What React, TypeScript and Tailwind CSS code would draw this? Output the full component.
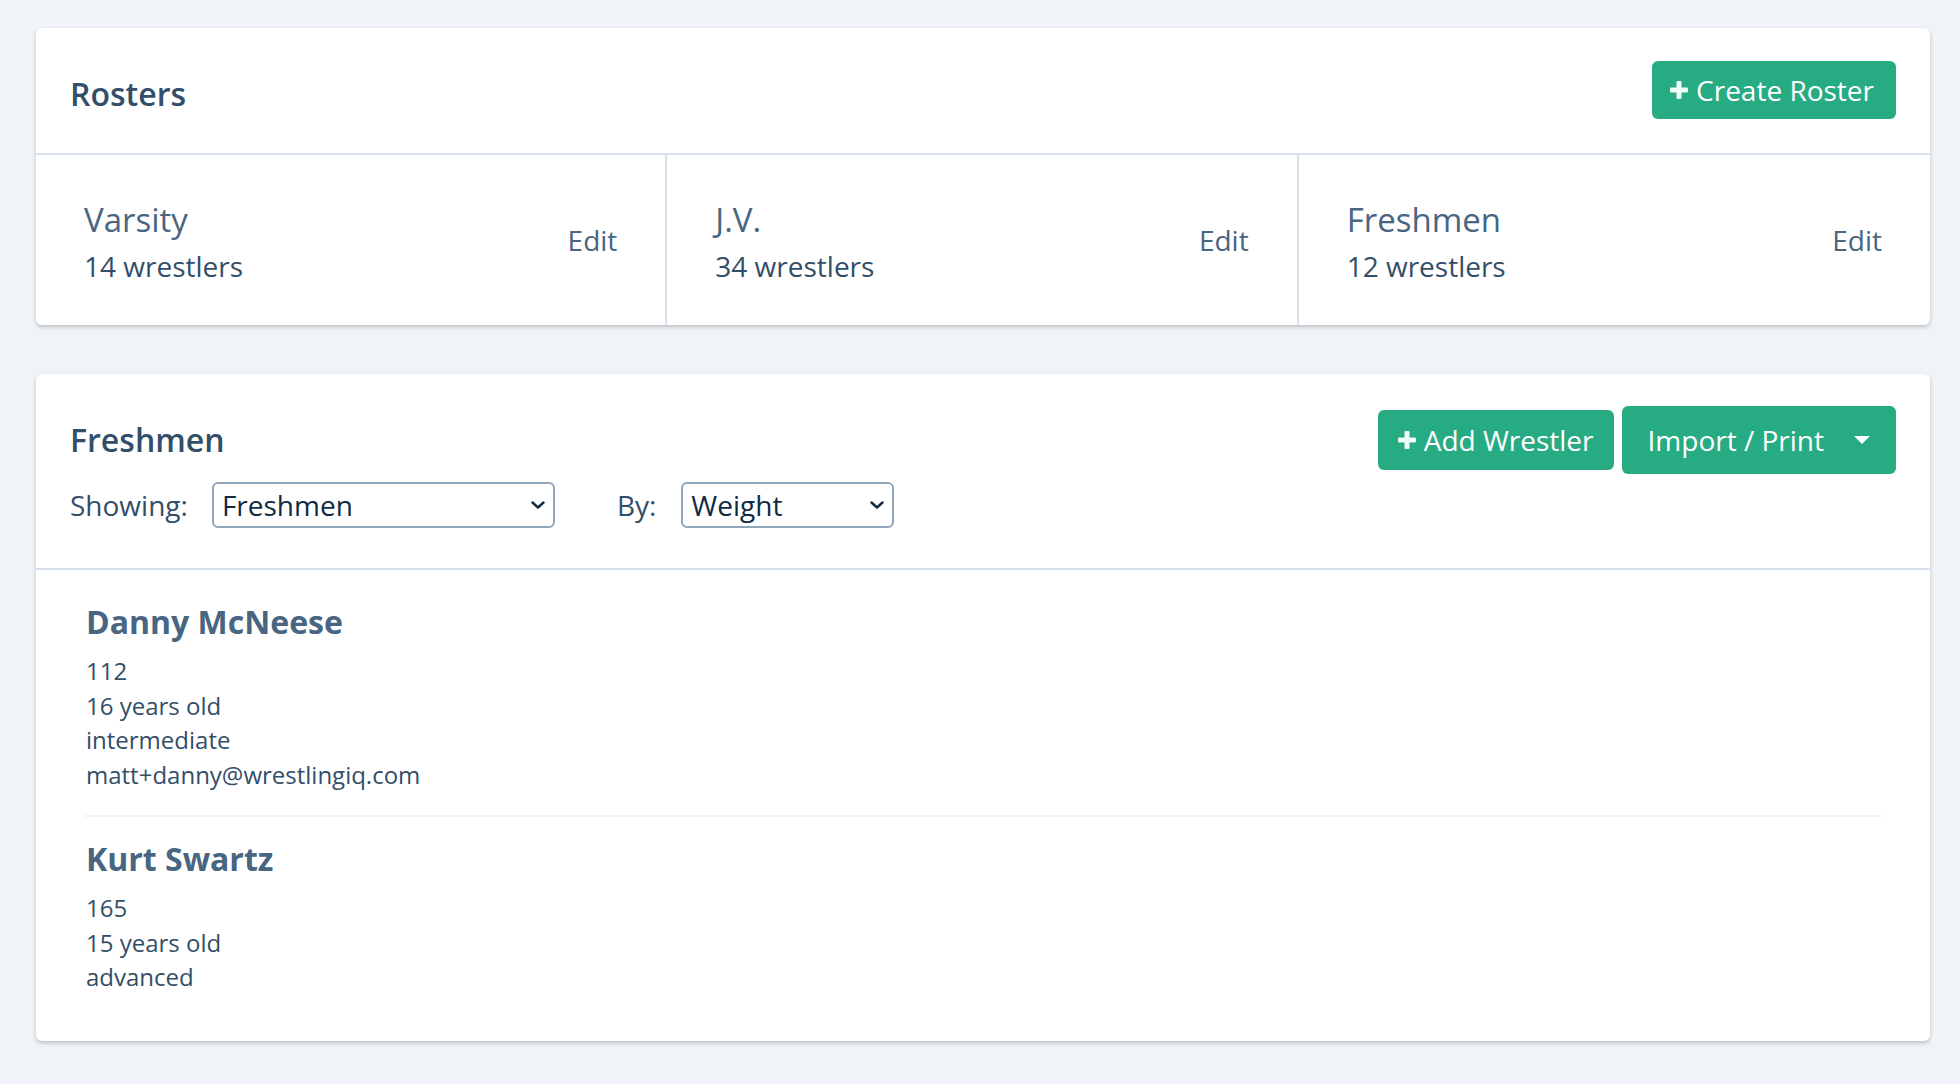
import React from "react";

const Plus = () => (
  <svg width="18" height="18" viewBox="0 0 18 18" className="shrink-0">
    <rect x="6.5" y="0" width="5" height="18" rx="1" fill="#EFFCF6" />
    <rect x="0" y="6.5" width="18" height="5" rx="1" fill="#EFFCF6" />
  </svg>
);

const Chevron = () => (
  <svg width="14" height="8" viewBox="0 0 14 8" className="shrink-0">
    <path d="M1.5 1.5 L7 6.5 L12.5 1.5" fill="none" stroke="#102A43" strokeWidth="2.4" strokeLinecap="round" strokeLinejoin="round" />
  </svg>
);

const Caret = () => (
  <svg width="16" height="8" viewBox="0 0 16 8" className="shrink-0">
    <path d="M0 0 L16 0 L8 8 Z" fill="#FFFFFF" />
  </svg>
);

const rosters = [
  { name: "Varsity", count: "14 wrestlers" },
  { name: "J.V.", count: "34 wrestlers" },
  { name: "Freshmen", count: "12 wrestlers" },
];

const wrestlers = [
  { name: "Danny McNeese", lines: ["112", "16 years old", "intermediate", "matt+danny@wrestlingiq.com"] },
  { name: "Kurt Swartz", lines: ["165", "15 years old", "advanced"] },
];

export default function App() {
  return (
    <div
      className="min-h-[1084px] w-full bg-[#F0F4F8] pl-[36px] pr-[30px] pt-[28px] pb-[40px]"
      style={{ fontFamily: "'Open Sans', 'Noto Sans', sans-serif" }}
    >
      {/* Rosters card */}
      <div className="rounded-[6px] bg-white shadow-[0_2px_4px_rgba(0,0,0,0.22)]">
        <div className="flex items-center justify-between border-b-2 border-[#D9E2EC] px-[34px] pt-[33px] pb-[34px]">
          <h2 className="pt-[8px] text-[32px] font-semibold leading-[44px] text-[#334E68]">Rosters</h2>
          <button className="flex h-[58px] items-center gap-[8px] rounded-[6px] bg-[#27AB83] pl-[18px] pr-[22px] text-[28px] leading-none text-white">
            <Plus />
            <span>Create Roster</span>
          </button>
        </div>
        <div className="grid grid-cols-3">
          {rosters.map((r, i) => (
            <div
              key={r.name}
              className={
                "flex h-[170px] items-center justify-between px-[48px] " +
                (i < 2 ? "border-r-2 border-[#D9E2EC]" : "")
              }
            >
              <div className="flex flex-col">
                <span className="text-[33px] leading-[52px] text-[#486581]">{r.name}</span>
                <span className="text-[28px] leading-[40px] text-[#334E68]">{r.count}</span>
              </div>
              <span className="text-[28px] leading-[40px] text-[#486581]">Edit</span>
            </div>
          ))}
        </div>
      </div>

      {/* Freshmen card */}
      <div className="mt-[49px] rounded-[6px] bg-white shadow-[0_2px_4px_rgba(0,0,0,0.22)]">
        <div className="border-b-2 border-[#D9E2EC] px-[34px] pt-[32px] pb-[40px]">
          <div className="flex h-[68px] items-center justify-between">
            <h2 className="text-[32px] font-semibold leading-[44px] text-[#334E68]">Freshmen</h2>
            <div className="flex items-center gap-[8px]">
              <button className="flex h-[60px] items-center gap-[8px] rounded-[6px] bg-[#27AB83] pl-[20px] pr-[20px] text-[28px] leading-none text-white">
                <Plus />
                <span>Add Wrestler</span>
              </button>
              <button className="flex h-[68px] items-center gap-[30px] rounded-[6px] bg-[#27AB83] px-[26px] text-[28px] leading-none text-white">
                <span>Import / Print</span>
                <Caret />
              </button>
            </div>
          </div>
          <div className="mt-[8px] flex h-[46px] items-center">
            <span className="text-[28px] text-[#334E68]">Showing:</span>
            <div className="ml-[24px] flex h-[46px] w-[343px] items-center justify-between rounded-[6px] border-2 border-[#8FA5BA] pl-[8px] pr-[8px]">
              <span className="text-[28px] leading-none text-[#102A43]">Freshmen</span>
              <Chevron />
            </div>
            <span className="ml-[62px] text-[28px] text-[#334E68]">By:</span>
            <div className="ml-[25px] flex h-[46px] w-[213px] items-center justify-between rounded-[6px] border-2 border-[#8FA5BA] pl-[8px] pr-[8px]">
              <span className="text-[28px] leading-none text-[#102A43]">Weight</span>
              <Chevron />
            </div>
          </div>
        </div>
        <div className="px-[48px] pt-[10px] pb-[23px]">
          {wrestlers.map((w, i) => (
            <div
              key={w.name}
              className={"pt-[20px] pb-[23px] pl-[2px] " + (i < wrestlers.length - 1 ? "border-b-2 border-[#F0F4F8]" : "")}
            >
              <div className="text-[32px] font-bold leading-[44px] text-[#486581]">{w.name}</div>
              <div className="mt-[10px] flex flex-col">
                {w.lines.map((l) => (
                  <span key={l} className="text-[24px] leading-[34.5px] text-[#334E68]">
                    {l}
                  </span>
                ))}
              </div>
            </div>
          ))}
        </div>
      </div>
    </div>
  );
}
